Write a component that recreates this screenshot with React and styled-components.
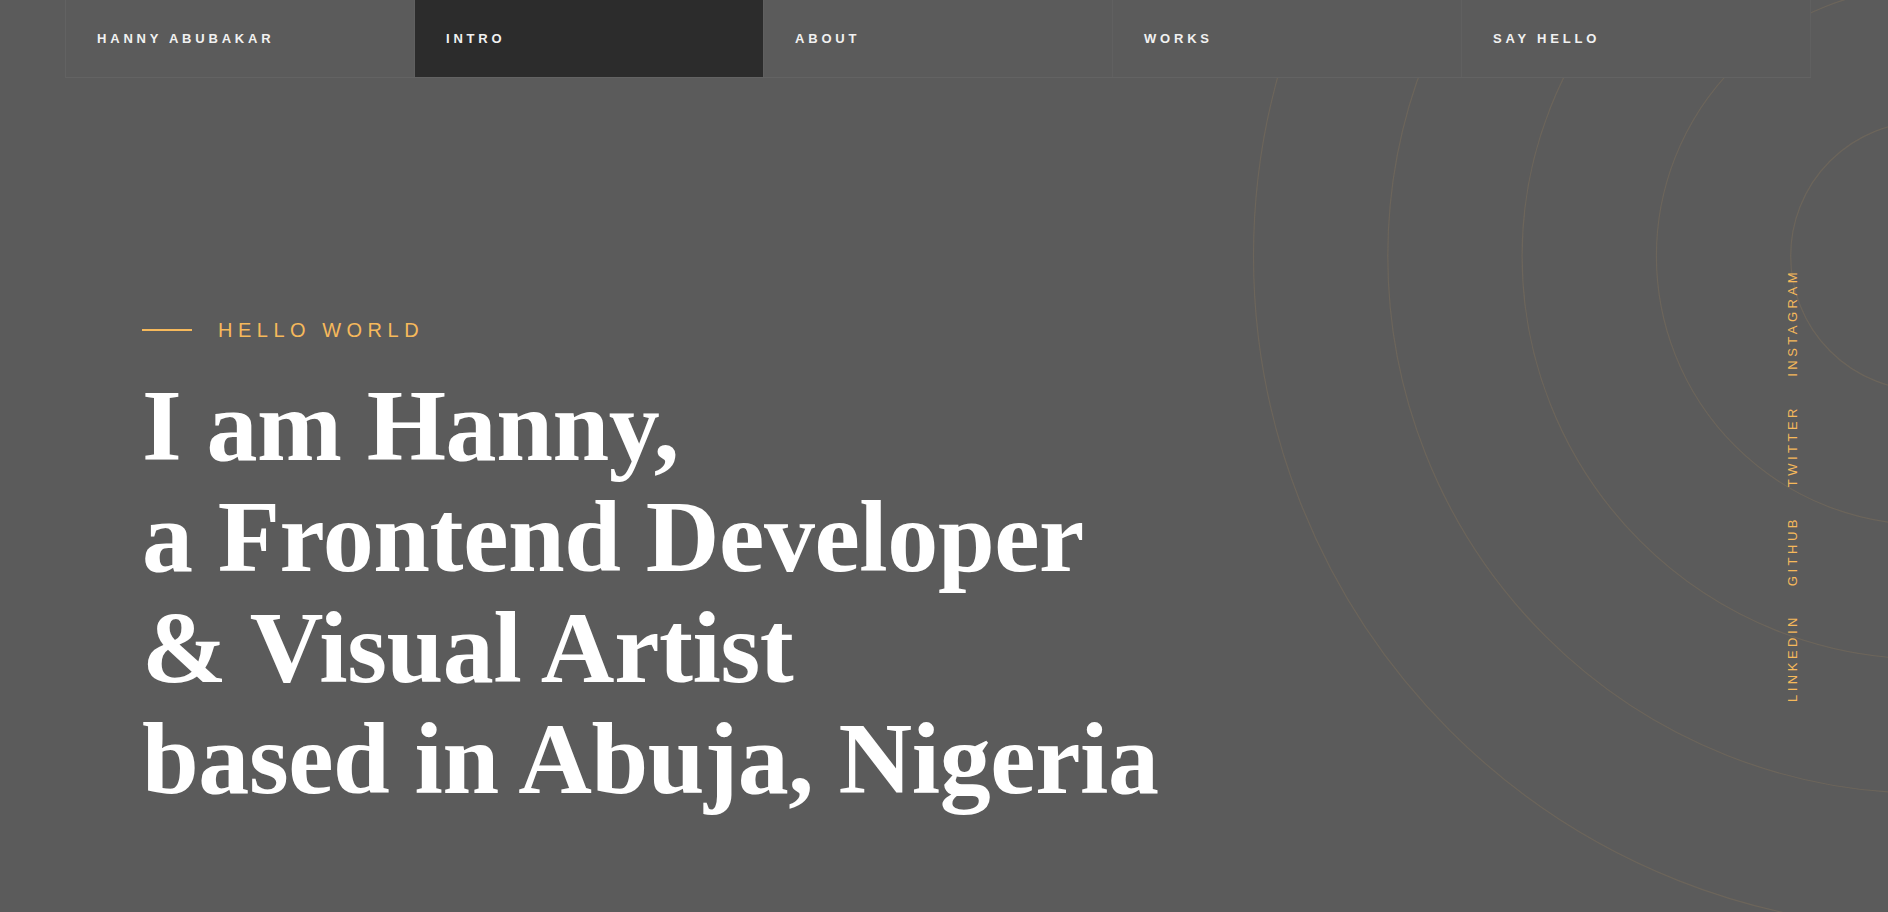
import React from "react";
import styled, { createGlobalStyle } from "styled-components";

const GlobalStyle = createGlobalStyle`
  html, body {
    margin: 0;
    padding: 0;
    height: 100%;
    background: #5b5b5b;
    overflow: hidden;
  }
  * { box-sizing: border-box; }
`;

const Page = styled.div`
  position: relative;
  height: 100vh;
  padding: 0 77px 0 65px;
  background: #5b5b5b;
  overflow: hidden;
`;

const Rings = styled.svg`
  position: absolute;
  top: 0;
  left: 0;
  width: 1888px;
  height: 912px;
  pointer-events: none;
  z-index: 0;
`;

const Nav = styled.nav`
  position: relative;
  z-index: 1;
  display: grid;
  grid-template-columns: repeat(5, 1fr);
  height: 78px;
  border-left: 1px solid #626262;
  border-bottom: 1px solid #636363;
`;

const NavItem = styled.a`
  display: flex;
  align-items: center;
  padding-left: 31px;
  border-right: 1px solid #606060;
  background: ${(p) => (p.$active ? "#2c2c2c" : "#5b5b5b")};
  color: #f1f1f1;
  font-family: "Liberation Sans", Arial, sans-serif;
  font-weight: 700;
  font-size: 13px;
  line-height: 13px;
  letter-spacing: 3.8px;
  text-transform: uppercase;
  text-decoration: none;
  white-space: nowrap;
`;

const Hero = styled.section`
  position: relative;
  z-index: 1;
  display: flex;
  justify-content: space-between;
  align-items: flex-start;
  padding-left: 77px;
`;

const HeroContent = styled.div`
  padding-top: 240px;
`;

const Eyebrow = styled.div`
  display: flex;
  align-items: center;
  gap: 26px;
  height: 24px;
`;

const Rule = styled.span`
  display: block;
  width: 50px;
  height: 2px;
  background: #f6b95b;
`;

const EyebrowText = styled.span`
  color: #f6b95b;
  font-family: "Liberation Sans", Arial, sans-serif;
  font-size: 20px;
  line-height: 24px;
  letter-spacing: 5.5px;
  text-transform: uppercase;
`;

const Heading = styled.h1`
  margin: 28px 0 0;
  color: #ffffff;
  font-family: "Liberation Serif", "Times New Roman", serif;
  font-weight: 700;
  font-size: 102px;
  line-height: 111px;
  letter-spacing: -0.4px;
`;

const Line = styled.span`
  display: block;
  white-space: nowrap;
`;

const Social = styled.ul`
  display: flex;
  flex-direction: column;
  align-items: center;
  gap: 28.5px;
  margin: 190.5px 12.5px 0 0;
  padding: 0;
  list-style: none;
`;

const SocialLink = styled.li`
  writing-mode: vertical-rl;
  transform: rotate(180deg);
  color: #f6b95b;
  font-family: "Liberation Sans", Arial, sans-serif;
  font-size: 13px;
  line-height: 13px;
  letter-spacing: 3.5px;
  text-transform: uppercase;
`;

const navItems = ["Hanny Abubakar", "Intro", "About", "Works", "Say Hello"];
const socials = ["Instagram", "Twitter", "Github", "Linkedin"];
const radii = [1, 2, 3, 4, 5].map((k) => k * 134.3);

export default function App() {
  return (
    <>
      <GlobalStyle />
      <Page>
        <Rings viewBox="0 0 1888 912" aria-hidden="true">
          {radii.map((r) => (
            <circle
              key={r}
              cx="1925"
              cy="256"
              r={r}
              fill="none"
              stroke="rgba(246,185,91,0.11)"
              strokeWidth="1.2"
            />
          ))}
        </Rings>
        <Nav>
          {navItems.map((item) => (
            <NavItem key={item} href="#" $active={item === "Intro"}>
              {item}
            </NavItem>
          ))}
        </Nav>
        <Hero>
          <HeroContent>
            <Eyebrow>
              <Rule />
              <EyebrowText>Hello World</EyebrowText>
            </Eyebrow>
            <Heading>
              <Line>I am Hanny,</Line>
              <Line>a Frontend Developer</Line>
              <Line>&amp; Visual Artist</Line>
              <Line>based in Abuja, Nigeria</Line>
            </Heading>
          </HeroContent>
          <Social>
            {socials.map((s) => (
              <SocialLink key={s}>{s}</SocialLink>
            ))}
          </Social>
        </Hero>
      </Page>
    </>
  );
}
